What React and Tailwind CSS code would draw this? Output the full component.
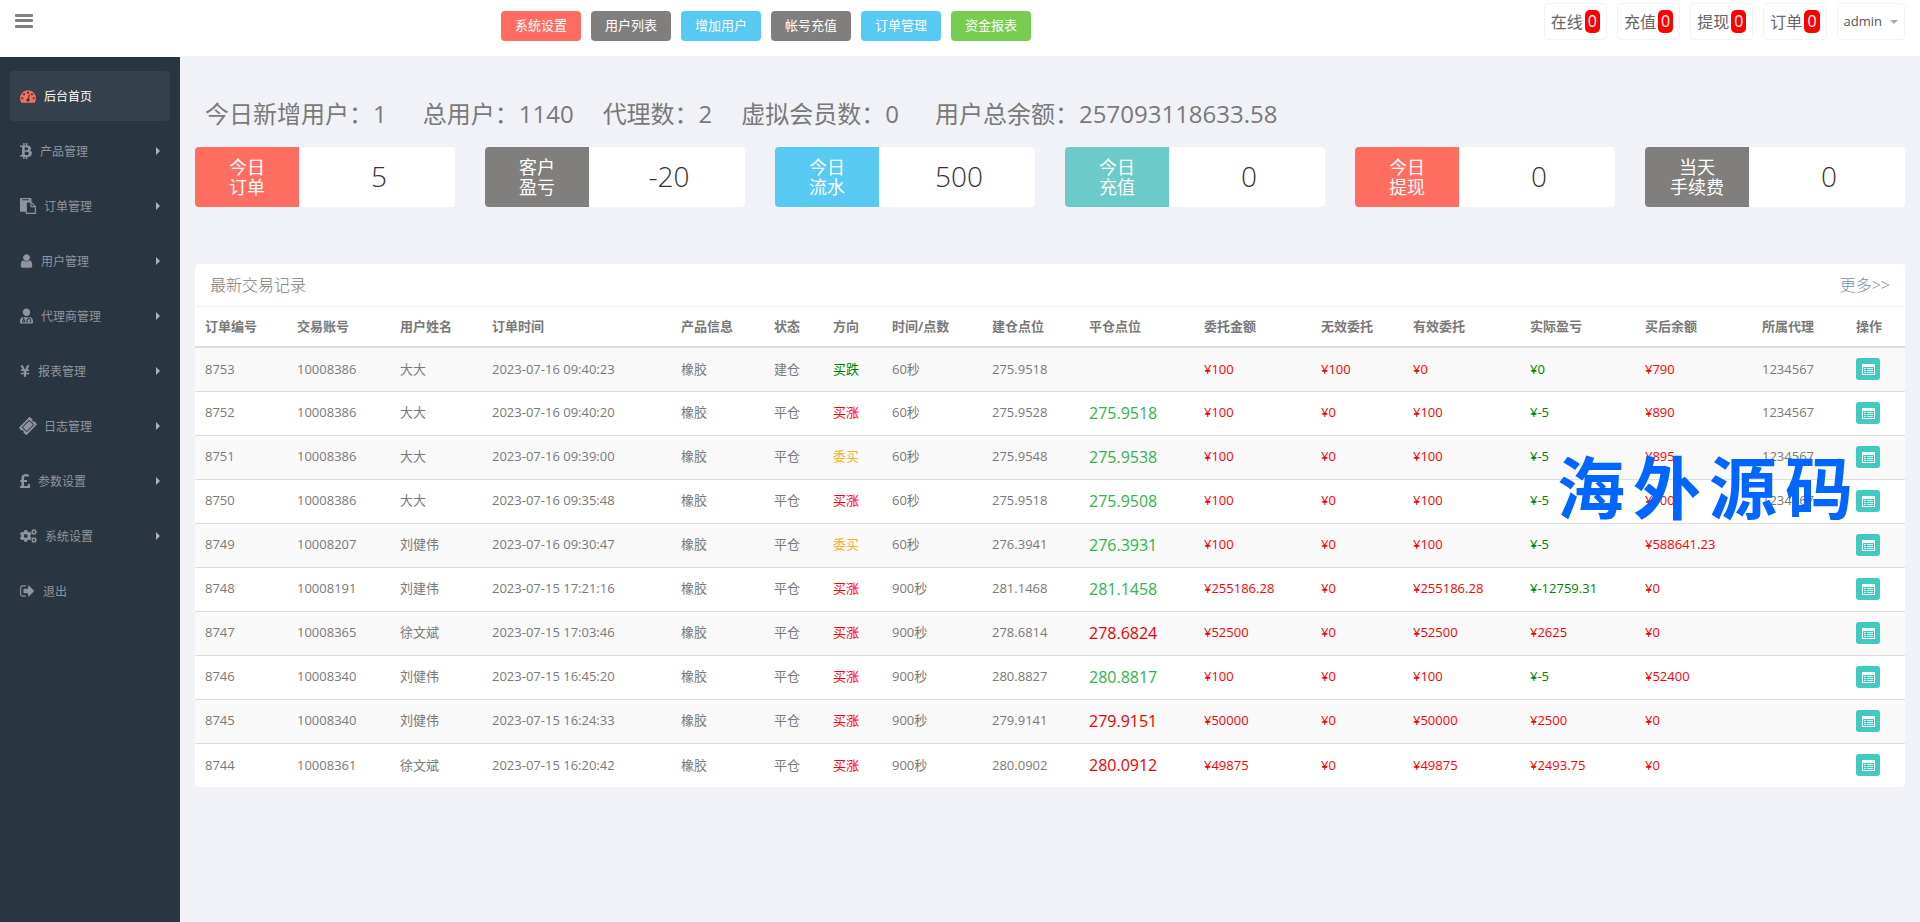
import clsx from "clsx";
import { FaBtc, FaCogs, FaPoundSign, FaTicketAlt, FaUserMd, FaYenSign } from "react-icons/fa";

const DashboardIcon = ({ className }) => (
  <svg viewBox="0 0 1792 1792" fill="currentColor" className={className}>
    <path d="M384 1152q0-53-37.5-90.5t-90.5-37.5-90.5 37.5-37.5 90.5 37.5 90.5 90.5 37.5 90.5-37.5 37.5-90.5zm192-448q0-53-37.5-90.5t-90.5-37.5-90.5 37.5-37.5 90.5 37.5 90.5 90.5 37.5 90.5-37.5 37.5-90.5zm428 481l101-382q6-26-7.5-48.5t-38.5-29.5-48 6.5-30 39.5l-101 382q-60 5-107 43.5t-63 98.5q-20 77 20 146t117 89 146-20 89-117q16-60-6-117t-72-91zm660-33q0-53-37.5-90.5t-90.5-37.5-90.5 37.5-37.5 90.5 37.5 90.5 90.5 37.5 90.5-37.5 37.5-90.5zm-640-640q0-53-37.5-90.5t-90.5-37.5-90.5 37.5-37.5 90.5 37.5 90.5 90.5 37.5 90.5-37.5 37.5-90.5zm448 192q0-53-37.5-90.5t-90.5-37.5-90.5 37.5-37.5 90.5 37.5 90.5 90.5 37.5 90.5-37.5 37.5-90.5zm320 448q0 261-141 483-19 29-54 29h-1402q-35 0-54-29-141-221-141-483 0-182 71-348t191-286 286-191 348-71 348 71 286 191 191 286 71 348z" />
  </svg>
);

const PasteIcon = ({ className }) => (
  <svg viewBox="0 0 1792 1792" fill="currentColor" className={className}>
    <path d="M768 1664h896v-640h-416q-40 0-68-28t-28-68v-416h-384v1152zm256-1440v-64q0-13-9.5-22.5t-22.5-9.5h-704q-13 0-22.5 9.5t-9.5 22.5v64q0 13 9.5 22.5t22.5 9.5h704q13 0 22.5-9.5t9.5-22.5zm256 672h299l-299-299v299zm512 128v672q0 40-28 68t-68 28h-960q-40 0-68-28t-28-68v-160h-544q-40 0-68-28t-28-68v-1344q0-40 28-68t68-28h1088q40 0 68 28t28 68v328q21 13 36 28l408 408q28 28 48 76t20 88z" />
  </svg>
);

const UserIcon = ({ className }) => (
  <svg viewBox="256 0 1280 1792" fill="currentColor" className={className}>
    <path d="M1536 1399q0 109-62.5 187t-150.5 78h-854q-88 0-150.5-78t-62.5-187q0-85 8.5-160.5t31.5-152 58.5-131 94-89 134.5-34.5q131 128 313 128t313-128q76 0 134.5 34.5t94 89 58.5 131 31.5 152 8.5 160.5zm-256-887q0 159-112.5 271.5t-271.5 112.5-271.5-112.5-112.5-271.5 112.5-271.5 271.5-112.5 271.5 112.5 112.5 271.5z" />
  </svg>
);

const SignOutIcon = ({ className }) => (
  <svg viewBox="64 0 1664 1792" fill="currentColor" className={className}>
    <path d="M704 1440q0 4 1 20t.5 26.5-3 23.5-10 19.5-20.5 6.5h-320q-119 0-203.5-84.5t-84.5-203.5v-704q0-119 84.5-203.5t203.5-84.5h320q13 0 22.5 9.5t9.5 22.5q0 4 1 20t.5 26.5-3 23.5-10 19.5-20.5 6.5h-320q-66 0-113 47t-47 113v704q0 66 47 113t113 47h312l11.5 1 11.5 3 8 5.5 7 9 2 13.5zm928-544q0 26-19 45l-544 544q-19 19-45 19t-45-19-19-45v-288h-448q-26 0-45-19t-19-45v-384q0-26 19-45t45-19h448v-288q0-26 19-45t45-19 45 19l544 544q19 19 19 45z" />
  </svg>
);

const ListIcon = () => (
  <svg viewBox="0 0 13 11" className="h-[11px] w-[13px]">
    <path fill="#fff" fillRule="evenodd" d="M0 0h13v11H0zM1 3v7h11V3z" />
    <path fill="#d9f4f2" d="M2 4h2v1H2zM5 4h6v1H5zM2 6h2v1H2zM5 6h6v1H5zM2 8h2v1H2zM5 8h6v1H5z" />
  </svg>
);

const menu = [
  { label: "后台首页", Icon: DashboardIcon, size: "w-4", active: true },
  { label: "产品管理", Icon: FaBtc, size: "w-3", sub: true },
  { label: "订单管理", Icon: PasteIcon, size: "w-4", sub: true },
  { label: "用户管理", Icon: UserIcon, size: "w-[13px]", sub: true },
  { label: "代理商管理", Icon: FaUserMd, size: "w-[13px]", sub: true },
  { label: "报表管理", Icon: FaYenSign, size: "w-[10px]", sub: true },
  { label: "日志管理", Icon: FaTicketAlt, size: "w-4 -rotate-45", sub: true },
  { label: "参数设置", Icon: FaPoundSign, size: "w-[10px]", sub: true },
  { label: "系统设置", Icon: FaCogs, size: "w-[17px]", sub: true },
  { label: "退出", Icon: SignOutIcon, size: "w-[15px]" },
];

const shortcuts = [
  { label: "系统设置", color: "bg-[#ff6c60]" },
  { label: "用户列表", color: "bg-[#817f7d]" },
  { label: "增加用户", color: "bg-[#58c9f3]" },
  { label: "帐号充值", color: "bg-[#817f7d]" },
  { label: "订单管理", color: "bg-[#58c9f3]" },
  { label: "资金报表", color: "bg-[#78cd51]" },
];

const cards = [
  { label: ["今日", "订单"], value: "5", color: "bg-[#ff6c60]" },
  { label: ["客户", "盈亏"], value: "-20", color: "bg-[#817f7d]" },
  { label: ["今日", "流水"], value: "500", color: "bg-[#58c9f3]" },
  { label: ["今日", "充值"], value: "0", color: "bg-[#6ccac9]" },
  { label: ["今日", "提现"], value: "0", color: "bg-[#ff6c60]" },
  { label: ["当天", "手续费"], value: "0", color: "bg-[#817f7d]" },
];

const columns = [
  { title: "订单编号", width: "w-[92px]" },
  { title: "交易账号", width: "w-[103px]" },
  { title: "用户姓名", width: "w-[92px]" },
  { title: "订单时间", width: "w-[189px]" },
  { title: "产品信息", width: "w-[93px]" },
  { title: "状态", width: "w-[59px]" },
  { title: "方向", width: "w-[59px]" },
  { title: "时间/点数", width: "w-[100px]" },
  { title: "建仓点位", width: "w-[97px]" },
  { title: "平仓点位", width: "w-[115px]" },
  { title: "委托金额", width: "w-[117px]" },
  { title: "无效委托", width: "w-[92px]" },
  { title: "有效委托", width: "w-[117px]" },
  { title: "实际盈亏", width: "w-[115px]" },
  { title: "买后余额", width: "w-[117px]" },
  { title: "所属代理", width: "w-[94px]" },
  { title: "操作", width: "w-[59px]" },
];

// id, account, name, time, state, direction, seconds, open, close, close went up, amount, invalid, valid, profit, balance, agent
const orders = [
  ["8753", "10008386", "大大", "2023-07-16 09:40:23", "建仓", "买跌", "60秒", "275.9518", "", false, "100", "100", "0", "0", "790", "1234567"],
  ["8752", "10008386", "大大", "2023-07-16 09:40:20", "平仓", "买涨", "60秒", "275.9528", "275.9518", false, "100", "0", "100", "-5", "890", "1234567"],
  ["8751", "10008386", "大大", "2023-07-16 09:39:00", "平仓", "委买", "60秒", "275.9548", "275.9538", false, "100", "0", "100", "-5", "895", "1234567"],
  ["8750", "10008386", "大大", "2023-07-16 09:35:48", "平仓", "买涨", "60秒", "275.9518", "275.9508", false, "100", "0", "100", "-5", "900", "1234567"],
  ["8749", "10008207", "刘健伟", "2023-07-16 09:30:47", "平仓", "委买", "60秒", "276.3941", "276.3931", false, "100", "0", "100", "-5", "588641.23", ""],
  ["8748", "10008191", "刘建伟", "2023-07-15 17:21:16", "平仓", "买涨", "900秒", "281.1468", "281.1458", false, "255186.28", "0", "255186.28", "-12759.31", "0", ""],
  ["8747", "10008365", "徐文斌", "2023-07-15 17:03:46", "平仓", "买涨", "900秒", "278.6814", "278.6824", true, "52500", "0", "52500", "2625", "0", ""],
  ["8746", "10008340", "刘健伟", "2023-07-15 16:45:20", "平仓", "买涨", "900秒", "280.8827", "280.8817", false, "100", "0", "100", "-5", "52400", ""],
  ["8745", "10008340", "刘健伟", "2023-07-15 16:24:33", "平仓", "买涨", "900秒", "279.9141", "279.9151", true, "50000", "0", "50000", "2500", "0", ""],
  ["8744", "10008361", "徐文斌", "2023-07-15 16:20:42", "平仓", "买涨", "900秒", "280.0902", "280.0912", true, "49875", "0", "49875", "2493.75", "0", ""],
];

const directionColor = {
  买跌: "text-[#008000]",
  买涨: "text-[#ff0000]",
  委买: "text-[#f9b12d]",
};

function Header() {
  return (
    <header className="flex h-14 items-start bg-white pr-[15px] pl-[15px]">
      <button aria-label="菜单" className="mt-[14px] w-[486px] text-[#808080]">
        <svg viewBox="0 0 18 14" fill="currentColor" className="h-[14px] w-[18px]">
          <rect width="18" height="3" rx="1" />
          <rect y="5" width="18" height="3" rx="1" />
          <rect y="11" width="18" height="3" rx="1" />
        </svg>
      </button>
      <nav className="mt-[11px] flex gap-[10px]">
        {shortcuts.map((s) => (
          <button key={s.label} className={clsx("h-[30px] rounded px-[14px] text-[13px] whitespace-nowrap text-white", s.color)}>
            {s.label}
          </button>
        ))}
      </nav>
      <div className="mt-[3px] ml-auto flex gap-[10px]">
        {["在线", "充值", "提现", "订单"].map((label) => (
          <a
            key={label}
            href="#"
            className="flex h-[37px] items-center gap-[2px] rounded border border-[#f1f2f7] px-[6px] text-base whitespace-nowrap text-[#666]"
          >
            {label}
            <span className="h-[23px] rounded-[5px] bg-[#ff0000] px-[3px] leading-[22px] text-white">0</span>
          </a>
        ))}
        <button className="flex h-[37px] items-center gap-2 rounded border border-[#f1f2f7] px-[6px] text-[13px] text-[#555]">
          admin
          <svg viewBox="0 0 8 4" className="h-1 w-2" fill="#a5abb8">
            <path d="M0 0h8L4 4z" />
          </svg>
        </button>
      </div>
    </header>
  );
}

function Sidebar() {
  return (
    <aside className="w-[180px] shrink-0 border-t border-white bg-[#2a3542] px-[10px] pt-[14px]">
      <ul className="flex flex-col gap-[5px]">
        {menu.map(({ label, Icon, size, active, sub }) => (
          <li key={label}>
            <a
              href="#"
              className={clsx(
                "flex h-[50px] items-center gap-2 rounded px-[10px] text-xs",
                active ? "bg-[#35404d] text-white" : "text-[#8f959b]"
              )}
            >
              <Icon className={clsx("h-4 shrink-0", size, active && "text-[#ff6c60]")} />
              <span className="pt-[2px]">{label}</span>
              {sub && (
                <svg viewBox="0 0 4 8" className="ml-auto h-2 w-1" fill="#aeb2b7">
                  <path d="M0 0l4 4-4 4z" />
                </svg>
              )}
            </a>
          </li>
        ))}
      </ul>
    </aside>
  );
}

function Orders() {
  return (
    <section className="relative mt-[57px] overflow-hidden rounded bg-white">
      <div className="flex h-[43px] items-center justify-between border-b border-[#eff2f7] px-[15px] text-base font-light">
        <h2>最新交易记录</h2>
        <a href="#" className="text-[#7a8fa6]">更多&gt;&gt;</a>
      </div>
      <table className="w-full table-fixed border-collapse text-left text-[13px] whitespace-nowrap">
        <thead>
          <tr className="h-10 border-b-2 border-[#ddd]">
            {columns.map((c) => (
              <th key={c.title} className={clsx("px-[10px] font-bold", c.width)}>{c.title}</th>
            ))}
          </tr>
        </thead>
        <tbody>
          {orders.map(([id, account, name, time, state, direction, seconds, open, close, up, amount, invalid, valid, profit, balance, agent]) => (
            <tr key={id} className="h-11 border-b border-[#ddd] odd:bg-[#f9f9f9] last:border-b-0">
              <td className="px-[10px]">{id}</td>
              <td className="px-[10px]">{account}</td>
              <td className="px-[10px]">{name}</td>
              <td className="px-[10px]">{time}</td>
              <td className="px-[10px]">橡胶</td>
              <td className="px-[10px]">{state}</td>
              <td className={clsx("px-[10px]", directionColor[direction])}>{direction}</td>
              <td className="px-[10px]">{seconds}</td>
              <td className="px-[10px]">{open}</td>
              <td className={clsx("px-[10px] text-base", up ? "text-[#ed0000]" : "text-[#2fb44e]")}>{close}</td>
              <td className="px-[10px] text-[#ff0000]">¥{amount}</td>
              <td className="px-[10px] text-[#ff0000]">¥{invalid}</td>
              <td className="px-[10px] text-[#ff0000]">¥{valid}</td>
              <td className={clsx("px-[10px]", Number(profit) > 0 ? "text-[#ff0000]" : "text-[#008000]")}>¥{profit}</td>
              <td className="px-[10px] text-[#ff0000]">¥{balance}</td>
              <td className="px-[10px]">{agent}</td>
              <td className="px-[10px]">
                <button aria-label="详情" className="flex h-[22px] w-6 items-center justify-center rounded-[3px] bg-[#41cac0]">
                  <ListIcon />
                </button>
              </td>
            </tr>
          ))}
        </tbody>
      </table>
      <div className="pointer-events-none absolute top-[190px] right-[52px] flex gap-2 text-[68px] leading-[68px] font-bold text-[#0066ff]">
        <span>海</span>
        <span>外</span>
        <span>源</span>
        <span>码</span>
      </div>
    </section>
  );
}

export default function App() {
  return (
    <div className="flex min-h-screen flex-col bg-[#f1f2f7] font-['Open_Sans','Noto_Sans_CJK_SC',sans-serif] text-[#797979]">
      <Header />
      <div className="flex flex-1">
        <Sidebar />
        <main className="min-w-0 flex-1 px-[15px] pt-[42px]">
          <h1 className="flex h-8 items-center px-[10px] text-2xl whitespace-nowrap">
            <span className="mr-9">今日新增用户：1</span>
            <span className="mr-[29px]">总用户：1140</span>
            <span className="mr-[29px]">代理数：2</span>
            <span className="mr-9">虚拟会员数：0</span>
            <span>用户总余额：257093118633.58</span>
          </h1>
          <div className="mt-[17px] grid grid-cols-6 gap-[30px]">
            {cards.map((card, i) => (
              <div key={i} className="flex h-[60px] overflow-hidden rounded bg-white">
                <div className={clsx("flex w-2/5 flex-col items-center justify-center text-lg leading-5 text-white", card.color)}>
                  <span>{card.label[0]}</span>
                  <span>{card.label[1]}</span>
                </div>
                <div className="flex flex-1 items-center justify-center pb-[2px] pl-1 text-[28px] font-light text-[#333]">
                  {card.value}
                </div>
              </div>
            ))}
          </div>
          <Orders />
        </main>
      </div>
    </div>
  );
}
